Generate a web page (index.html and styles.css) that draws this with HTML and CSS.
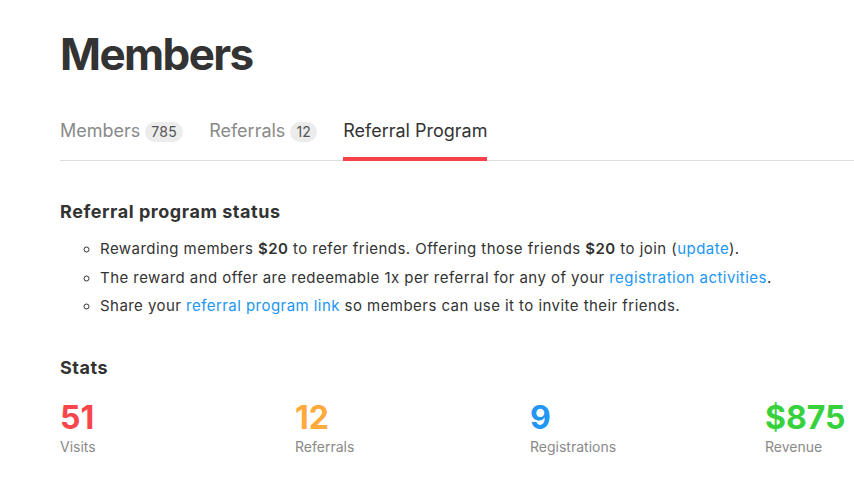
FILE: index.html
```html
<!DOCTYPE html>
<html>
<head>
<meta charset="utf-8">
<link rel="stylesheet" href="styles.css">
</head>
<body>
<div class="page">
  <h1 class="title">Members</h1>
  <nav class="tabs">
    <a class="tab">Members <span class="badge">785</span></a>
    <a class="tab">Referrals <span class="badge">12</span></a>
    <a class="tab active">Referral Program</a>
  </nav>
  <section class="section">
    <h2 class="heading">Referral program status</h2>
    <ul class="list">
      <li>Rewarding members <b>$20</b> to refer friends. Offering those friends <b>$20</b> to join (<a class="link">update</a>).</li>
      <li>The reward and offer are redeemable 1x per referral for any of your <a class="link">registration activities</a>.</li>
      <li>Share your <a class="link">referral program link</a> so members can use it to invite their friends.</li>
    </ul>
  </section>
  <section class="section stats-section">
    <h2 class="heading">Stats</h2>
    <div class="stats">
      <div class="stat"><div class="num red">51</div><div class="label">Visits</div></div>
      <div class="stat"><div class="num orange">12</div><div class="label">Referrals</div></div>
      <div class="stat"><div class="num blue">9</div><div class="label">Registrations</div></div>
      <div class="stat"><div class="num green">$875</div><div class="label">Revenue</div></div>
    </div>
  </section>
</div>
</body>
</html>
```
FILE: styles.css
```css
html, body {
  margin: 0;
  padding: 0;
  background: #fff;
  overflow: hidden;
}
body {
  font-family: Inter, "Helvetica Neue", Arial, sans-serif;
  color: #333;
  width: 854px;
  height: 485px;
}
.page {
  padding: 0 0 0 60px;
  width: 940px;
}
.title {
  margin: 26px 0 0;
  font-size: 44px;
  font-weight: 700;
  line-height: 56px;
  letter-spacing: -1.6px;
  color: #333;
}
.tabs {
  display: flex;
  gap: 26px;
  margin-top: 30px;
  border-bottom: 1px solid #ddd;
}
.tab {
  font-size: 18px;
  line-height: 24px;
  color: #8a8a8a;
  padding: 7px 0 14px;
  border-bottom: 4px solid transparent;
  margin-bottom: -1px;
  display: flex;
  align-items: center;
  gap: 5px;
}
.tab.active {
  color: #333;
  border-bottom-color: #f5424a;
}
.badge {
  font-size: 14px;
  line-height: 20px;
  background: #ececec;
  color: #555;
  border-radius: 10px;
  padding: 0 6px;
  margin-top: 2px;
  letter-spacing: 0.3px;
}
.section {
  margin-top: 39px;
}
.heading {
  margin: 0;
  font-size: 18px;
  line-height: 24px;
  font-weight: 700;
  letter-spacing: 0.55px;
  color: #333;
}
.list {
  margin: 11px 0 0;
  padding-left: 40px;
  list-style: circle;
  font-size: 15px;
  line-height: 28.5px;
  letter-spacing: 0.45px;
  color: #333;
}
.list li::marker {
  font-size: 14px;
}
.list b {
  font-weight: 600;
}
.link {
  color: #2196f3;
}
.stats-section {
  margin-top: 35px;
}
.stats {
  display: grid;
  grid-template-columns: repeat(4, 235px);
  margin-top: 18px;
}
.num {
  font-size: 32px;
  line-height: 40px;
  font-weight: 700;
}
.red { color: #f9464b; }
.orange { color: #ffaa3c; }
.blue { color: #2196f3; }
.green { color: #37d13d; }
.label {
  font-size: 14px;
  line-height: 18px;
  margin-top: 0;
  color: #8a8a8a;
}
```
